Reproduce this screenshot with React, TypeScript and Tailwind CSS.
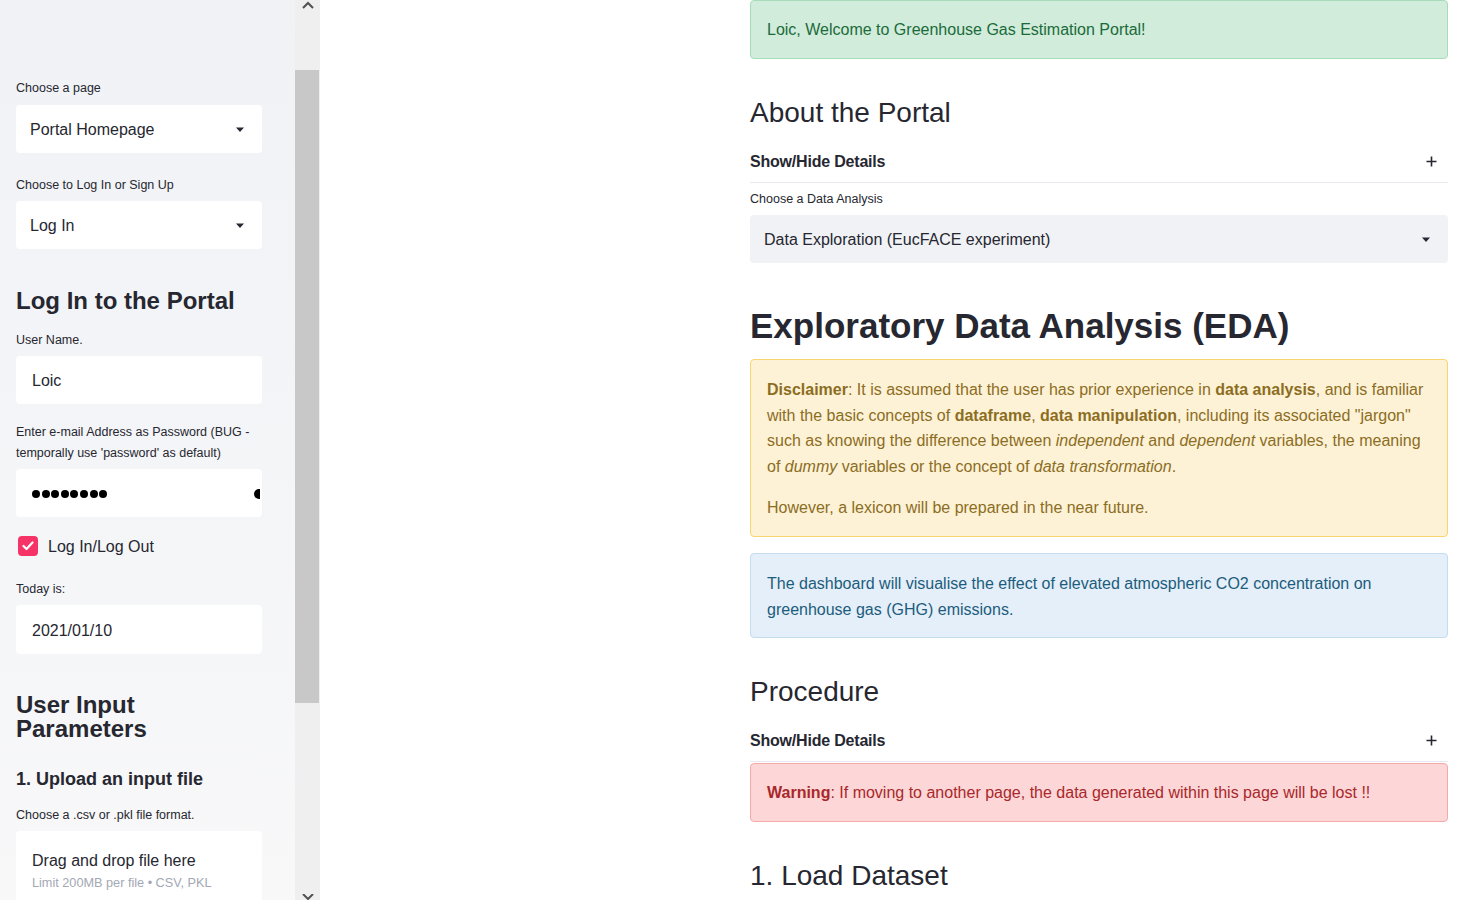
import React from "react";

const Caret = () => (
  <svg width="10" height="6" viewBox="0 0 10 6" className="shrink-0">
    <path d="M1 0.5 L9 0.5 L5 5 Z" fill="#262730" />
  </svg>
);

const Label = ({ children, className = "" }: { children: React.ReactNode; className?: string }) => (
  <div className={`pt-[1px] text-[12.5px] leading-[16px] text-[#262730] ${className}`}>{children}</div>
);

const WhiteBox = ({ children, className = "" }: { children: React.ReactNode; className?: string }) => (
  <div className={`h-[48px] w-[246px] rounded-[4px] bg-white flex items-center pt-[2px] text-[16px] text-[#262730] ${className}`}>{children}</div>
);

export default function App() {
  return (
    <div className="h-[900px] w-[1477px] overflow-hidden flex bg-white font-['Liberation_Sans',Arial,sans-serif] text-[#262730]">
      {/* Sidebar */}
      <div className="w-[295px] h-full bg-gradient-to-b from-[#f0f2f6] to-[#f8f8f9] px-4 pt-[79px] shrink-0">
        <Label>Choose a page</Label>
        <WhiteBox className="mt-[9px] pl-[14px] pr-[17px] justify-between">
          <span>Portal Homepage</span>
          <Caret />
        </WhiteBox>
        <Label className="mt-[23px]">Choose to Log In or Sign Up</Label>
        <WhiteBox className="mt-[8px] pl-[14px] pr-[17px] justify-between">
          <span>Log In</span>
          <Caret />
        </WhiteBox>
        <h2 className="mt-[36px] pt-[1px] text-[24px] leading-[30px] font-bold text-[#262730]">Log In to the Portal</h2>
        <Label className="mt-[15px]">User Name.</Label>
        <WhiteBox className="mt-[8px] pl-4">Loic</WhiteBox>
        <div className="mt-[16.5px] pt-[1px] text-[12.5px] leading-[21px] text-[#262730]">
          Enter e-mail Address as Password (BUG - temporally use 'password' as default)
        </div>
        <WhiteBox className="mt-[5.5px] pl-4 justify-between">
          <div className="flex gap-[1.6px]">
            {Array.from({ length: 8 }).map((_, i) => (
              <span key={i} className="block w-[8px] h-[8px] rounded-full bg-black" />
            ))}
          </div>
          <span className="block w-[6px] h-[10px] rounded-l-full bg-black mr-[2px]" />
        </WhiteBox>
        <div className="mt-[19px] flex items-center h-[20px]">
          <span className="ml-[2px] w-[20px] h-[20px] rounded-[4px] bg-[#f63366] flex items-center justify-center">
            <svg width="12" height="10" viewBox="0 0 12 10">
              <path d="M1.5 5 L4.5 8 L10.5 1.5" stroke="white" strokeWidth="2.2" fill="none" strokeLinecap="round" strokeLinejoin="round" />
            </svg>
          </span>
          <span className="ml-[10px] pt-[2px] text-[16px] text-[#262730]">Log In/Log Out</span>
        </div>
        <Label className="mt-[24px]">Today is:</Label>
        <WhiteBox className="mt-[8px] pl-4 h-[49px]">2021/01/10</WhiteBox>
        <h2 className="mt-[38px] pt-[1px] text-[24px] leading-[24px] font-bold text-[#262730]">
          User Input
          <br />
          Parameters
        </h2>
        <h3 className="mt-[25px] pt-[1px] text-[18px] leading-[24px] font-bold text-[#262730]">1. Upload an input file</h3>
        <Label className="mt-[15px]">Choose a .csv or .pkl file format.</Label>
        <div className="mt-[8px] w-[246px] h-[90px] rounded-[4px] bg-white pl-4 pt-[18px]">
          <div className="text-[16px] leading-[24px] text-[#262730]">Drag and drop file here</div>
          <div className="mt-[2px] text-[12.7px] leading-[16px] text-[#a3a8b4]">Limit 200MB per file • CSV, PKL</div>
        </div>
      </div>

      {/* Sidebar scrollbar */}
      <div className="w-[25px] h-full bg-[#efefef] flex flex-col shrink-0">
        <div className="h-[70px] flex justify-center pt-[1px]">
          <svg width="12" height="8" viewBox="0 0 12 8">
            <path d="M1 7 L6 2 L11 7" stroke="#505050" strokeWidth="2" fill="none" />
          </svg>
        </div>
        <div className="h-[633px] w-[24px] bg-[#c8c8c8]" />
        <div className="flex-1 flex items-end justify-center pb-0">
          <svg width="12" height="6" viewBox="0 0 12 6">
            <path d="M1 0 L6 5 L11 0" stroke="#505050" strokeWidth="2" fill="none" />
          </svg>
        </div>
      </div>

      {/* Main */}
      <div className="flex-1 h-full pl-[430px]">
        <div className="w-[698px]">
          <div className="h-[59px] rounded-[4px] border border-[#a7dcb8] bg-[#d1ecdb] flex items-center px-4 pt-[1px] text-[16px] text-[#1b6b3a]">
            Loic, Welcome to Greenhouse Gas Estimation Portal!
          </div>

          <h2 className="mt-[36px] pt-[1px] text-[28px] leading-[34px] font-normal text-[#262730]">About the Portal</h2>
          <div className="mt-[10px] h-[43px] border-b border-[#e6e9ef] flex items-center justify-between pt-[1px]">
            <span className="text-[16px] font-bold text-[#262730] tracking-[-0.2px]">Show/Hide Details</span>
            <svg width="11" height="11" viewBox="0 0 11 11" className="mr-[11px]">
              <path d="M5.5 0.5 V10.5 M0.5 5.5 H10.5" stroke="#262730" strokeWidth="1.6" />
            </svg>
          </div>
          <Label className="mt-[7px]">Choose a Data Analysis</Label>
          <div className="mt-[8px] h-[48px] rounded-[4px] bg-[#f0f2f6] flex items-center justify-between pl-[14px] pr-[17px] pt-[2px] text-[16px] text-[#262730]">
            <span>Data Exploration (EucFACE experiment)</span>
            <Caret />
          </div>

          <h1 className="mt-[41px] pt-[1px] text-[35px] leading-[42px] font-bold text-[#262730]">Exploratory Data Analysis (EDA)</h1>

          <div className="mt-[12px] rounded-[4px] border border-[#f7d56f] bg-[#fdf2d6] px-4 pt-[17px] pb-[15px] text-[16px] leading-[25.6px] text-[#8c6d1f]">
            <p>
              <b>Disclaimer</b>: It is assumed that the user has prior experience in <b>data analysis</b>, and is familiar with the basic concepts of <b>dataframe</b>, <b>data manipulation</b>, including its associated "jargon" such as knowing the difference between <i>independent</i> and <i>dependent</i> variables, the meaning of <i>dummy</i> variables or the concept of <i>data transformation</i>.
            </p>
            <p className="mt-4">However, a lexicon will be prepared in the near future.</p>
          </div>

          <div className="mt-[16px] rounded-[4px] border border-[#c3dcf0] bg-[#e4eff9] px-4 pt-[17px] pb-[15px] text-[16px] leading-[25.6px] text-[#1c5c7c]">
            The dashboard will visualise the effect of elevated atmospheric CO2 concentration on greenhouse gas (GHG) emissions.
          </div>

          <h2 className="mt-[36px] pt-[1px] text-[28px] leading-[34px] font-normal text-[#262730]">Procedure</h2>
          <div className="mt-[10px] h-[43px] border-b border-[#e6e9ef] flex items-center justify-between pt-[1px]">
            <span className="text-[16px] font-bold text-[#262730] tracking-[-0.2px]">Show/Hide Details</span>
            <svg width="11" height="11" viewBox="0 0 11 11" className="mr-[11px]">
              <path d="M5.5 0.5 V10.5 M0.5 5.5 H10.5" stroke="#262730" strokeWidth="1.6" />
            </svg>
          </div>

          <div className="mt-[1px] h-[59px] rounded-[4px] border border-[#f5a9a9] bg-[#fdd6d7] flex items-center px-4 pt-[1px] text-[16px] text-[#a8282b]">
            <span>
              <b>Warning</b>: If moving to another page, the data generated within this page will be lost !!
            </span>
          </div>

          <h2 className="mt-[36px] pt-[1px] text-[28px] leading-[34px] font-normal text-[#262730]">1. Load Dataset</h2>
        </div>
      </div>
    </div>
  );
}
